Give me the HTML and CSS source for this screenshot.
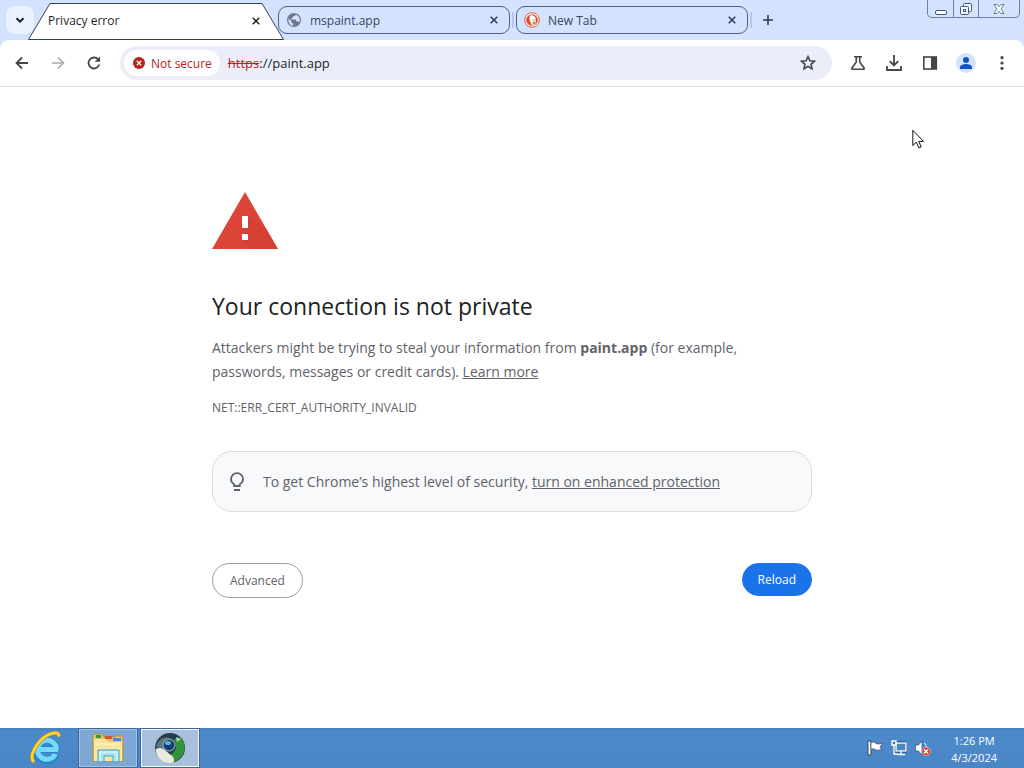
FILE: index.html
```html
<!DOCTYPE html>
<html lang="en">

<head>
  <meta charset="UTF-8">
  <meta name="viewport" content="width=device-width, initial-scale=1.0">
  <title>Privacy error</title>
  <link rel="stylesheet" href="styles.css">
</head>

<body>
  <header class="browser">
    <nav class="tab-strip">
      <button type="button" class="tab-search" aria-label="Search tabs">
        <svg width="10" height="10" viewBox="0 0 10 10"><path d="M1.5 3.2L5 6.7l3.5-3.5" fill="none" stroke="#1f1f1f" stroke-width="2"/></svg>
      </button>
      <div class="tab tab-active">
        <svg class="tab-shape" viewBox="0 0 256 37" preserveAspectRatio="none"><path d="M.5 36.5L22 .5h212l21.500 36z" fill="#fff" stroke="#33405e"/></svg>
        <span class="tab-title">Privacy error</span>
        <button type="button" class="tab-close" aria-label="Close tab">
          <svg width="8" height="8" viewBox="0 0 8 8"><path d="M.7.7l6.600 6.600M7.300.7L.7 7.300" stroke="#1f1f1f" stroke-width="1.500"/></svg>
        </button>
      </div>
      <div class="tab tab-behind">
        <svg class="favicon" viewBox="0 0 16 16"><circle cx="8" cy="8" r="7" fill="#70798a"/><path d="M2.600 6.500l3 3v1.300l1.500 1v2C4.500 13.500 2.500 11 2.400 8.500zM9.500 2.400c0 1.500-1 1.600-2.500 1.800v1.600H5.500v1.700h4.200l1 2h1.600l1.200.8c.9-2 .5-6-4-7.900z" fill="#d5e3fd"/></svg>
        <span class="tab-title">mspaint.app</span>
        <button type="button" class="tab-close" aria-label="Close tab">
          <svg width="8" height="8" viewBox="0 0 8 8"><path d="M.7.7l6.600 6.600M7.300.7L.7 7.300" stroke="#2d3a58" stroke-width="1.500"/></svg>
        </button>
      </div>
      <span class="separator"></span>
      <div class="tab">
        <svg class="favicon" viewBox="0 0 16 16"><circle cx="8" cy="8" r="7.300" fill="#fff" stroke="#de5833" stroke-width="1"/><circle cx="8" cy="8" r="5.800" fill="#de4b32"/><path d="M6 3.500c3-1 5.800 1 5.800 4l-.3 4.500-3.300 1.300C6.500 11 4.600 7 6 3.500z" fill="#fff"/><path d="M8.300 7.300l3.400.6-2.900 1.500z" fill="#f9b42d"/><path d="M8.300 10.200l3-.4-.2 2.300-2.500-.3z" fill="#61a83b"/></svg>
        <span class="tab-title">New Tab</span>
        <button type="button" class="tab-close" aria-label="Close tab">
          <svg width="8" height="8" viewBox="0 0 8 8"><path d="M.7.7l6.600 6.600M7.300.7L.7 7.300" stroke="#2d3a58" stroke-width="1.500"/></svg>
        </button>
      </div>
      <span class="separator"></span>
      <button type="button" class="new-tab" aria-label="New tab">
        <svg width="10" height="10" viewBox="0 0 10 10"><path d="M5 0v10M0 5h10" stroke="#2d3a58" stroke-width="1.600"/></svg>
      </button>
      <div class="window-buttons">
        <button type="button" aria-label="Minimize">
          <svg width="12" height="14" viewBox="0 0 12 14"><rect x=".5" y="8.500" width="11" height="4" rx="1.500" fill="#fff" stroke="#475779"/></svg>
        </button>
        <button type="button" aria-label="Restore">
          <svg width="14" height="14" viewBox="0 0 14 14"><g fill="#f4f8ff" stroke="#475779"><rect x="4.500" y="1.500" width="8" height="8" rx="1"/><rect x="1.500" y="4.500" width="8" height="8" rx="1"/><rect x="4.500" y="7.500" width="2" height="2"/></g></svg>
        </button>
        <button type="button" class="window-close" aria-label="Close">
          <svg width="12" height="12" viewBox="0 0 12 12"><path d="M1 1.500h3l2 2.300 2-2.300h3L8 6l3 4.500H8L6 8.200l-2 2.300H1L4 6z" fill="#fff" stroke="#5b6b8d" stroke-width=".9"/></svg>
        </button>
      </div>
    </nav>

    <div class="toolbar">
      <button type="button" class="tool" aria-label="Back">
        <svg viewBox="0 0 16 16"><path d="M14 8H3M8 2.500L2.500 8 8 13.500" fill="none" stroke="#444746" stroke-width="1.800"/></svg>
      </button>
      <button type="button" class="tool" aria-label="Forward" disabled>
        <svg viewBox="0 0 16 16"><path d="M2 8h11M8 2.500L13.500 8 8 13.500" fill="none" stroke="#a6a8aa" stroke-width="1.600"/></svg>
      </button>
      <button type="button" class="tool" aria-label="Reload this page">
        <svg viewBox="0 0 16 16"><path d="M13.300 9.500A5.500 5.500 0 1 1 12 4.200l1 1" fill="none" stroke="#444746" stroke-width="1.800"/><path d="M14 1.500v5.300H8.700z" fill="#444746"/></svg>
      </button>
      <div class="omnibox">
        <button type="button" class="chip">
          <svg width="12" height="12" viewBox="0 0 12 12"><circle cx="6" cy="6" r="6" fill="#b3261e"/><path d="M3.800 3.800l4.400 4.400M8.200 3.800L3.800 8.200" stroke="#fff" stroke-width="1.300"/></svg>
          Not secure
        </button>
        <label class="scheme" for="url">https</label>
        <input type="text" id="url" value="://paint.app" spellcheck="false">
        <button type="button" class="bookmark" aria-label="Bookmark this tab">
          <svg viewBox="0 0 16 16"><path d="M8 1.600l1.900 4.200 4.600.4-3.500 3.100 1 4.500L8 11.400l-4 2.400 1-4.500-3.500-3.100 4.600-.4z" fill="none" stroke="#444746" stroke-width="1.600"/></svg>
        </button>
      </div>
      <button type="button" class="tool" aria-label="Chrome Labs">
        <svg viewBox="0 0 16 16"><path d="M4 1.800h8M6.300 2v5L1.800 13.200c-.3.600 0 1 .6 1h11.200c.6 0 .9-.4.6-1L9.700 7V2" fill="none" stroke="#444746" stroke-width="1.600"/></svg>
      </button>
      <button type="button" class="tool" aria-label="Downloads">
        <svg viewBox="0 0 16 16"><path d="M8 0v10M3.800 6.200L8 10.400l4.200-4.200M1 11v4h14v-4" fill="none" stroke="#444746" stroke-width="1.800"/></svg>
      </button>
      <button type="button" class="tool" aria-label="Side panel">
        <svg viewBox="0 0 16 16"><rect x="1.800" y="2" width="12.500" height="12" fill="none" stroke="#444746" stroke-width="1.600"/><path d="M9 2h5.500v12H9z" fill="#444746"/></svg>
      </button>
      <button type="button" class="tool" aria-label="Profile">
        <svg class="avatar" viewBox="0 0 20 20"><circle cx="10" cy="10" r="10" fill="#d3e3fd"/><circle cx="10" cy="7" r="3" fill="#1552c6"/><path d="M4 16v-2c0-2 3.500-3 6-3s6 1 6 3v2z" fill="#1552c6"/></svg>
      </button>
      <button type="button" class="tool" aria-label="Menu">
        <svg viewBox="0 0 16 16"><g fill="#444746"><circle cx="8" cy="2.700" r="1.600"/><circle cx="8" cy="8" r="1.600"/><circle cx="8" cy="13.300" r="1.600"/></g></svg>
      </button>
    </div>
  </header>

  <main class="page">
    <div class="interstitial">
      <svg class="warning" width="66" height="57" viewBox="0 0 66 57"><path d="M33 0l33 57H0z" fill="#db4437"/><path d="M36 24l19 14 11 19H42l-12-9z" fill="#c93d31" opacity=".35"/><path d="M30 24h6v12h-6zM30 42h6v6h-6z" fill="#fff"/></svg>
      <h1>Your connection is not private</h1>
      <p>Attackers might be trying to steal your information from <strong>paint.app</strong> (for example, passwords, messages or credit cards). <a href="#">Learn more</a></p>
      <div class="error-code">NET::ERR_CERT_AUTHORITY_INVALID</div>
      <div class="promo">
        <svg width="16" height="20" viewBox="0 0 16 20"><path d="M5.200 14v-1.800C3.200 11 2 9.300 2 7.200a6 6 0 0 1 12 0c0 2.100-1.200 3.800-3.200 5V14z" fill="none" stroke="#5f6368" stroke-width="1.800"/><path d="M5 18h6" stroke="#5f6368" stroke-width="2"/></svg>
        <span>To get Chrome’s highest level of security, <a href="#">turn on enhanced protection</a></span>
      </div>
      <div class="actions">
        <button type="button" class="advanced">Advanced</button>
        <button type="button" class="reload">Reload</button>
      </div>
    </div>
  </main>

  <footer class="taskbar">
    <button type="button" class="task" aria-label="Internet Explorer">
      <svg width="34" height="34" viewBox="0 0 34 34">
        <path d="M7 18.500h22M27.500 23A10 10 0 1 1 28 18.500" fill="none" stroke="#2386c5" stroke-width="7"/>
        <path d="M8 18.500h21M26.500 23A9.500 9.500 0 1 1 27.500 18.500" fill="none" stroke="#75d9fa" stroke-width="5"/>
        <path d="M5 31C-1 26 8 10 18 4.500c6-3.500 12-4 12 1" fill="none" stroke="#ad8b22" stroke-width="4"/>
        <path d="M5 31C-1 26 8 10 18 4.500c6-3.500 12-4 12 1" fill="none" stroke="#ffd334" stroke-width="2.800"/>
      </svg>
    </button>
    <button type="button" class="task task-open" aria-label="File Explorer">
      <svg width="34" height="32" viewBox="0 0 34 32">
        <path d="M2 4l1-2h8l2 3h10l2-1h7v25H2z" fill="#e8c65d" stroke="#b99035"/>
        <path d="M5 3h5v3H5z" fill="#2f9c48"/><path d="M14 4h7v3h-7z" fill="#d85234"/><path d="M22 6h8v3h-8z" fill="#438fd1"/>
        <path d="M3 7h12l2 3h14v19H3z" fill="#f8e6a0"/>
        <path d="M4 12h27" stroke="#fff5c8"/>
        <path d="M7 30V18h21v12h-6v-6h-9v6z" fill="#a9e1f5" stroke="#3aa3ca"/>
        <path d="M8 20h19M9 20v9M26 20v9" stroke="#ecfcff"/>
      </svg>
    </button>
    <button type="button" class="task task-open task-current" aria-label="Chromium">
      <svg width="32" height="32" viewBox="0 0 32 32">
        <circle cx="16" cy="16" r="15" fill="#243f4a"/>
        <path d="M17 7C10 3 4 8 2 14l8 6 8-12z" fill="#567681"/>
        <path d="M20 7l8-1c5 8 3 19-7 24l-5-7c7-3 7-10 4-16z" fill="#33933d"/>
        <path d="M22 5l5 2-4 3z" fill="#a7dfa5"/>
        <path d="M1.500 17c7-3 10 2 14 5 5 3 5 6 4 8.500C9 33 2 26 1.500 17z" fill="#e9eadc"/>
        <circle cx="15" cy="13" r="6.500" fill="#8ea1a9"/><circle cx="15" cy="13" r="5.300" fill="#123e78"/>
        <ellipse cx="14" cy="11" rx="3" ry="2" fill="#69a9df"/>
      </svg>
    </button>
    <div class="tray">
      <svg width="16" height="16" viewBox="0 0 16 16"><path d="M1 1h3v14H1z" fill="#fff" stroke="#304761"/><path d="M4 2.500c3-1 4 0 5 1 2 1 4 0 6.500 0L13 7l1.500 2.500c-3 1-5 1-6.500 0-1-1-2-1-4 0z" fill="#fff" stroke="#304761" stroke-width=".7"/></svg>
      <svg width="16" height="16" viewBox="0 0 16 16"><rect x="5" y="3" width="10" height="8" fill="#4f86bd" stroke="#263f5d" stroke-width="3"/><rect x="5" y="3" width="10" height="8" fill="#4f86bd" stroke="#fff" stroke-width="1.300"/><path d="M10 11v3M6 14.500h8M1 1h4v4H1zM3 5v9h3" fill="none" stroke="#fff" stroke-width="1.300"/></svg>
      <svg width="16" height="16" viewBox="0 0 16 16"><path d="M.5 5h3L7 1v14l-3.500-4h-3z" fill="#fff" stroke="#304761" stroke-width=".7"/><path d="M9 3c2 1 2.500 3 2.500 5" fill="none" stroke="#dce9f5"/><circle cx="11" cy="11.500" r="4.300" fill="#d93c34" stroke="#f2c3bd" stroke-width=".7"/><path d="M9 9.500l4 4M13 9.500l-4 4" stroke="#fff" stroke-width="1.400"/></svg>
      <time class="clock" datetime="2024-04-03T13:26">1:26 PM<br>4/3/2024</time>
    </div>
  </footer>

  <svg class="cursor" width="13" height="21" viewBox="0 0 13 21"><path d="M.8 1.300v15.200l3.500-3.300 2.600 5.700 2.300-1-2.500-5.500h4.800z" fill="#fff" stroke="#111"/></svg>
</body>

</html>
```
FILE: styles.css
```css
body {
  margin: 0;
  min-height: 100vh;
  display: flex;
  flex-direction: column;
  background: #fff;
  font-family: "Open Sans", "Noto Sans", sans-serif;
  font-size: 12px;
}

button {
  display: flex;
  align-items: center;
  justify-content: center;
  padding: 0;
  border: 0;
  background: none;
  color: inherit;
  font: inherit;
}

svg {
  flex: none;
}

.browser {
  background: #d3e3fd;
}

/* tabs */

.tab-strip {
  display: flex;
  align-items: center;
  height: 40px;
  padding: 0 4px 0 6px;
}

.tab-search {
  flex: none;
  width: 28px;
  height: 28px;
  border-radius: 9px;
  background: #e9f0fe;
}

.tab {
  display: flex;
  align-items: center;
  flex: 0 1 232px;
  box-sizing: border-box;
  min-width: 0;
  height: 28px;
  padding: 0 10px 0 7px;
  border: 1px solid #50608a;
  border-radius: 9px;
  color: #3a4560;
}

.tab-active {
  position: relative;
  z-index: 1;
  flex-basis: 256px;
  align-self: flex-end;
  height: 37px;
  margin-left: -6px;
  padding: 0 23px 2px 20px;
  border: 0;
  color: #1f1f1f;
}

.tab-behind {
  margin-left: -6px;
}

.tab-shape {
  position: absolute;
  top: 0;
  left: 0;
  z-index: -1;
  width: 100%;
  height: 100%;
}

.favicon {
  width: 16px;
  height: 16px;
  margin-right: 8px;
}

.tab-title {
  flex: 1;
  overflow: hidden;
  white-space: nowrap;
}

.tab-close {
  width: 10px;
  height: 16px;
}

.separator {
  flex: none;
  width: 2px;
  height: 16px;
  margin: 0 2px;
  background: #b5c7e9;
}

.new-tab {
  width: 28px;
  height: 28px;
}

.window-buttons {
  display: flex;
  align-self: flex-start;
  flex: none;
  box-sizing: border-box;
  height: 18px;
  margin-left: auto;
  border: 1px solid #6b7fa8;
  border-top: 0;
  border-radius: 0 0 5px 5px;
}

.window-buttons button {
  width: 25px;
}

.window-buttons button + button {
  border-left: 1px solid #6b7fa8;
}

.window-buttons .window-close {
  width: 41px;
}

/* toolbar */

.toolbar {
  display: flex;
  align-items: center;
  height: 46px;
  padding: 0 4px;
  border-bottom: 1px solid #dfe0e2;
  border-radius: 9px 9px 0 0;
  background: #fff;
}

.tool {
  flex: none;
  width: 36px;
  height: 34px;
}

.tool svg {
  width: 16px;
  height: 16px;
}

.tool .avatar {
  width: 20px;
  height: 20px;
}

.omnibox {
  display: flex;
  align-items: center;
  flex: 1;
  min-width: 0;
  height: 34px;
  margin: 0 8px;
  border-radius: 17px;
  background: #ebeef9;
  color: #1f1f1f;
  font-size: 13px;
}

.chip {
  flex: none;
  gap: 6px;
  height: 26px;
  margin: 0 8px 0 4px;
  padding: 0 8px 0 9px;
  border-radius: 13px;
  background: #fff;
  color: #b3261e;
  font-size: 12px;
}

.scheme {
  color: #b3261e;
  text-decoration: line-through;
}

.omnibox input {
  flex: 1;
  min-width: 0;
  padding: 0;
  border: 0;
  outline: 0;
  background: none;
  color: inherit;
  font: inherit;
}

.bookmark {
  width: 32px;
  height: 32px;
  margin-right: 8px;
}

.bookmark svg {
  width: 16px;
  height: 16px;
}

/* warning page */

.page {
  flex: 1;
  padding: 105px 24px 40px;
  color: #5f6368;
}

.interstitial {
  max-width: 600px;
  margin: 0 auto;
  font-size: 14px;
  line-height: 24px;
}

.warning {
  display: block;
  margin-bottom: 41px;
}

h1 {
  margin: 0 0 14px;
  color: #202124;
  font-size: 23px;
  font-weight: 400;
  line-height: 32px;
}

.interstitial p {
  margin: 0 0 12px;
}

.interstitial a {
  color: inherit;
}

.error-code {
  margin-bottom: 31px;
  font-size: 12px;
}

.promo {
  display: flex;
  align-items: center;
  gap: 18px;
  padding: 18px 16px 17px;
  border: 1px solid #dadce0;
  border-radius: 20px;
  background: #f8f9fb;
}

.actions {
  display: flex;
  align-items: flex-start;
  justify-content: space-between;
  margin-top: 51px;
}

.actions button {
  height: 35px;
  padding: 1px 17px 0;
  border: 1px solid #9aa0a6;
  border-radius: 20px;
  font-size: 12px;
}

.actions .reload {
  height: 33px;
  padding: 1px 15px 0;
  border-color: #1a73e8;
  background: #1a73e8;
  color: #fff;
}

/* taskbar */

.taskbar {
  display: flex;
  align-items: center;
  height: 40px;
  padding: 0 27px 0 17px;
  background: linear-gradient(#4580bf, #4d8aca 4px, #4a86c6);
}

.task {
  box-sizing: border-box;
  width: 58px;
  height: 38px;
  margin-right: 4px;
}

.task-open {
  border: 1px solid #a5c3e3;
  outline: 1px solid #3b689b;
  background: #7fa7d4;
}

.task-current {
  border-color: #f3f7fb;
  background: #a9bfdb;
}

.tray {
  display: flex;
  align-items: center;
  gap: 8px;
  margin-left: auto;
  color: #fff;
}

.clock {
  margin-left: 12px;
  padding-top: 1px;
  font-size: 11px;
  line-height: 17px;
  text-align: center;
}

.cursor {
  position: absolute;
  top: 129px;
  left: 912px;
}
```
